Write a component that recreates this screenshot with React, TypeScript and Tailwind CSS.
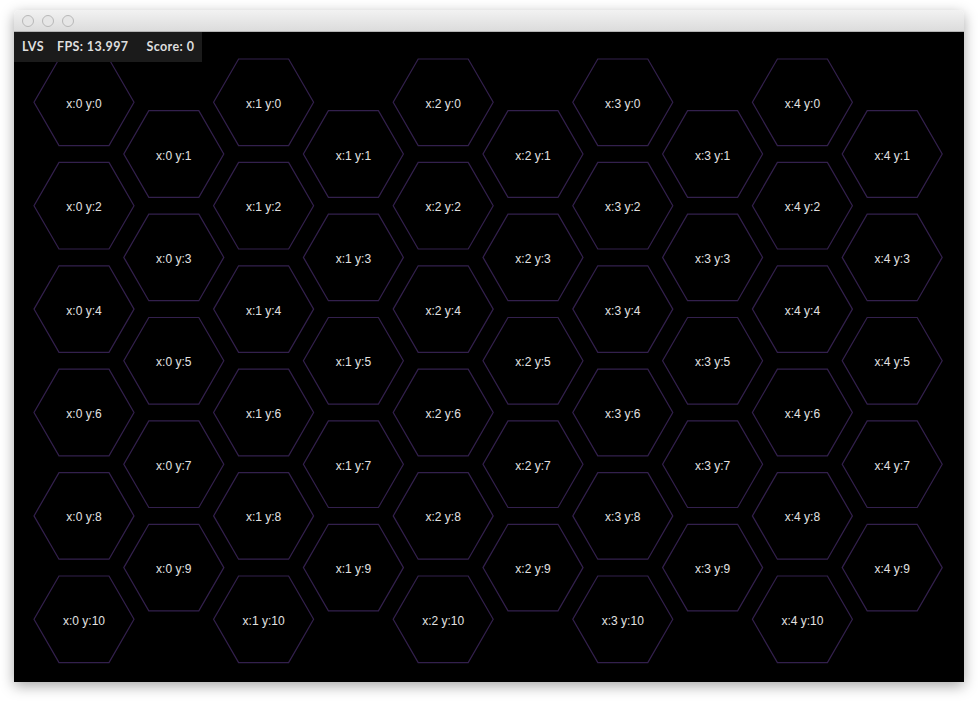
import React from 'react'

// ── Grid geometry ──────────────────────────────────────────────────────────

const R = 50
const COL_STEP = 89.8
const ROW_STEP = 51.7
const X0 = 70
const Y0 = 70.3

type Cell = { x: number; y: number; cx: number; cy: number }

const CELLS: Cell[] = []
for (let y = 0; y <= 10; y++) {
  for (let x = 0; x < 5; x++) {
    const col = x * 2 + (y % 2)
    CELLS.push({ x, y, cx: X0 + col * COL_STEP, cy: Y0 + y * ROW_STEP })
  }
}

function hexPoints(cx: number, cy: number) {
  const pts: string[] = []
  for (let i = 0; i < 6; i++) {
    const a = (Math.PI / 3) * i
    pts.push(`${(cx + R * Math.cos(a)).toFixed(2)},${(cy + R * Math.sin(a)).toFixed(2)}`)
  }
  return pts.join(' ')
}

// ── App ────────────────────────────────────────────────────────────────────

export default function App() {
  return (
    <div className="w-[978px] h-[702px] bg-white overflow-hidden pt-[10px] pl-[14px]">
      <div className="w-[950px] rounded-t-[5px] shadow-[0_4px_14px_rgba(0,0,0,0.35)]">
        <TitleBar />
        <div className="relative w-[950px] h-[650px] bg-black overflow-hidden">
          <svg width={950} height={650} className="block">
            {CELLS.map(c => (
              <g key={`${c.x}-${c.y}`}>
                <polygon
                  points={hexPoints(c.cx, c.cy)}
                  fill="none"
                  stroke="#33204d"
                  strokeWidth={1.2}
                />
                <text
                  x={c.cx}
                  y={c.cy + 5.5}
                  textAnchor="middle"
                  fill="#e2e2e2"
                  fontSize={12}
                  fontFamily="'Liberation Sans', Arial, sans-serif"
                >
                  {`x:${c.x} y:${c.y}`}
                </text>
              </g>
            ))}
          </svg>
          <Hud />
        </div>
      </div>
    </div>
  )
}

// ── TitleBar ───────────────────────────────────────────────────────────────

function TitleBar() {
  return (
    <div className="h-[22px] rounded-t-[5px] bg-gradient-to-b from-[#f2f2f2] to-[#dcdcdc] border-b border-[#b4b4b4] flex items-center gap-[8px] pl-[8px]">
      <span className="w-[12px] h-[12px] rounded-full bg-[#e6e6e6] border border-[#b8b8b8]" />
      <span className="w-[12px] h-[12px] rounded-full bg-[#e6e6e6] border border-[#b8b8b8]" />
      <span className="w-[12px] h-[12px] rounded-full bg-[#e6e6e6] border border-[#b8b8b8]" />
    </div>
  )
}

// ── HUD overlay ────────────────────────────────────────────────────────────

function Hud() {
  return (
    <div className="absolute top-0 left-0 w-[188px] h-[30px] bg-[#1b1b1b] flex items-center pl-[8px] text-[12.5px] font-bold text-[#dedede] font-['Lato',sans-serif] tracking-[0.4px]">
      <span>LVS</span>
      <span className="ml-[13px]">FPS: 13.997</span>
      <span className="ml-[18px]">Score: 0</span>
    </div>
  )
}
